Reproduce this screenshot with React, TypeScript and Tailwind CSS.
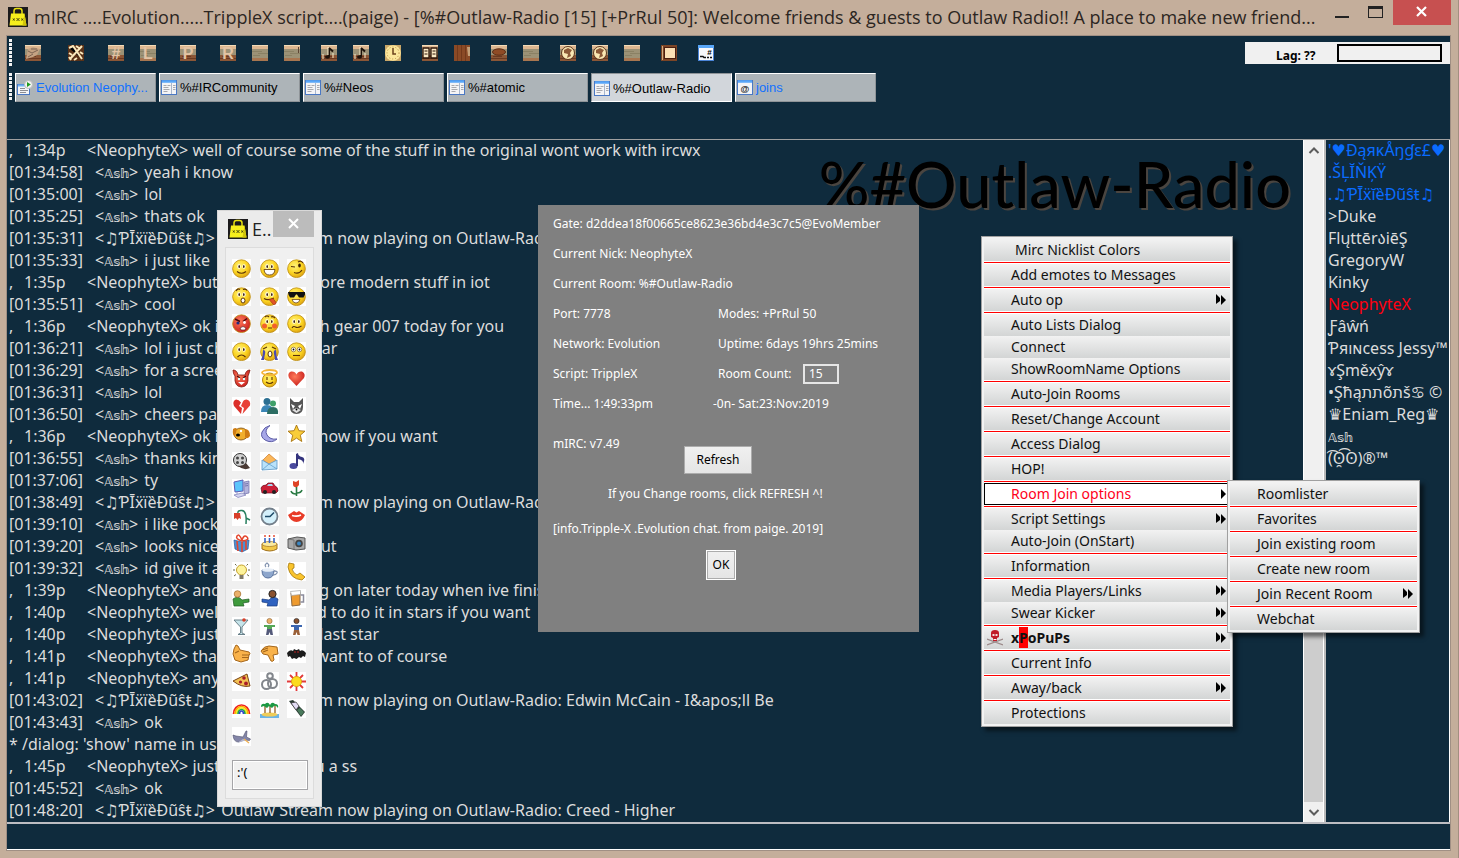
import type { ReactNode } from 'react'
import { clsx } from 'clsx'

const tahoma = "[font-family:'Noto_Sans','DejaVu_Sans',sans-serif]"
const segoe = "[font-family:'Open_Sans','Noto_Sans',sans-serif]"

/* ---------- shared icons ---------- */

function BagIcon() {
  return (
    <svg viewBox="0 0 20 20" className="h-5 w-5 shrink-0" aria-hidden="true">
      <rect width="20" height="20" fill="#1b1a1c" />
      <path d="M6 7V4q0-2.600 2.400-2.600h3.200Q14 1.400 14 4v3" fill="none" stroke="#e8e010" strokeWidth="1.500" />
      <path d="M3 6.500h13.500L18.500 18.500H1.500z" fill="#f6ee1c" />
      <path d="M16.500 6.500L18.500 18.500h-4z" fill="#d2c40a" />
      <path d="M5 11.500l1.500 2m0-2l-1.500 2M8.500 11l3 3m0-3l-3 3M13.500 11.500l1.500 2m0-2l-1.500 2" stroke="#35330c" strokeWidth=".9" />
    </svg>
  )
}

function WindowIcon({ kind }: { kind: 'status' | 'channel' | 'custom' }) {
  return (
    <svg viewBox="0 0 16 15" className="h-[15px] w-4 shrink-0" aria-hidden="true">
      <rect x=".5" y={kind === 'status' ? 4.5 : 0.5} width={kind === 'status' ? 12 : 15} height={kind === 'status' ? 10 : 14} fill="#f4f4f6" stroke="#4a78c4" />
      {kind === 'status' ? (
        <>
          <path d="M1 5.500h11" stroke="#6fb2f5" strokeWidth="2" />
          <path d="M3 8.500h5M3 10.500h8M3 12.500h6" stroke="#8d8d92" />
          <circle cx="11.500" cy="4.500" r="4" fill="#f2f2f2" stroke="#b9b9b9" />
          <path d="M10 2v5l3.800-2.500z" fill="#1d9a1d" />
        </>
      ) : (
        <path d="M1 1.500h14" stroke="#58a6f8" strokeWidth="2.500" />
      )}
      {kind === 'channel' && (
        <>
          <path d="M10.500 3v11" stroke="#a8b6cc" />
          <path d="M2.500 5.500h3m1 0h3M2.500 7.500h5M2.500 9.500h6M2.500 11.500h4M12 5.500h2.500M12 7.500h2.500M12 9.500h2.500" stroke="#a9a9ae" />
        </>
      )}
      {kind === 'custom' && (
        <text x="8" y="11.500" textAnchor="middle" fontSize="9" fontWeight="700" fontFamily="Liberation Sans" fill="#222">
          @
        </text>
      )}
    </svg>
  )
}

/* ---------- toolbar ---------- */

type Tool = { label: string; draw: ReactNode; space: string }

const glyph = (text: string) => (
  <text x="8" y="14" textAnchor="middle" fontSize="16" fontWeight="700" fontFamily="Liberation Sans" fill="#e2c3a4">
    {text}
  </text>
)

const clay = (
  <>
    <rect y="10" width="16" height="6" fill="#8b5636" />
    <path d="M0 13.500h16M2 11.500h9" stroke="#6b3a22" />
  </>
)
const plank = (
  <>
    <path d="M0 6.500h10M6 8.500h10M1 10.500h7" stroke="#8a8164" />
    <rect y="13" width="16" height="3" fill="#a87650" />
  </>
)
const note = (
  <>
    {clay}
    <path d="M8 3v8.500M8 3l4 3.500" stroke="#1d120a" strokeWidth="2" fill="none" />
    <ellipse cx="6.500" cy="12" rx="2.500" ry="1.800" fill="#1d120a" />
    <path d="M7 2v8M12 8v5M2 9v5" stroke="#fbeecb" />
  </>
)
const globe = (
  <>
    {clay}
    <circle cx="8" cy="8" r="6.500" fill="#fae8b4" stroke="#5b341c" />
    <path d="M4 5l4-2 4 2-2 3 1 3-4 2 1-4-4-1z" fill="#8c5a38" />
  </>
)

const tools: Tool[] = [
  { label: 'Connect', draw: <>{clay}<path d="M1 14L3 4l5-2 7 2-3 6-4 2z" fill="#c4a282" /><path d="M3 6l4 2 6-3M3 12l5-3M6 4h6" stroke="#7d6453" fill="none" /></>, space: 'mr-[27px]' },
  { label: 'Options', draw: <><rect width="16" height="16" fill="#5a3218" /><path d="M1 3l4-2 9 13M14 1L2 14M1 8l3 2M12 7l3 2M6 15l3-2M1 12l2 3M8 1l3 2" stroke="#fbe9bd" strokeWidth="2" /></>, space: 'mr-6' },
  { label: 'Channels', draw: <>{clay}{glyph('#')}</>, space: 'mr-4' },
  { label: 'List', draw: <>{plank}{glyph('L')}</>, space: 'mr-6' },
  { label: 'Popups', draw: <>{clay}{glyph('P')}</>, space: 'mr-6' },
  { label: 'Remote', draw: <>{clay}{glyph('R')}</>, space: 'mr-4' },
  { label: 'Aliases', draw: plank, space: 'mr-4' },
  { label: 'Variables', draw: <>{plank}<path d="M14.500 2v6" stroke="#5d4433" /></>, space: 'mr-[21px]' },
  { label: 'Play', draw: note, space: 'mr-4' },
  { label: 'Songs', draw: note, space: 'mr-4' },
  { label: 'Timer', draw: <><rect width="16" height="16" fill="#c9a768" /><circle cx="8" cy="8" r="7.800" fill="#fbe79c" /><path d="M8 3v6h3" stroke="#6b421d" fill="none" strokeWidth="1.500" /><circle cx="8" cy="8" r="6" fill="none" stroke="#b98d42" strokeDasharray="1 2" /></>, space: 'mr-[21px]' },
  { label: 'Address book', draw: <>{clay}<path d="M1 3h6v10H1zM9 3h6v10H9z" fill="#fbe9c4" stroke="#2c1508" strokeWidth="1.300" /><path d="M2.500 6h3M2.500 9h3M10.500 6h3M10.500 9h3" stroke="#2c1508" /></>, space: 'mr-4' },
  { label: 'Door', draw: <><rect width="16" height="16" fill="#8a4a26" /><path d="M3.500 0v16M7.500 0v16M11.500 0v16" stroke="#73391b" /><path d="M13 2h3v9h-2z" fill="#c4a078" /></>, space: 'mr-[21px]' },
  { label: 'Notify', draw: <>{clay}<ellipse cx="8" cy="7" rx="6.500" ry="3.200" fill="#8f4b26" stroke="#5d2e16" /></>, space: 'mr-4' },
  { label: 'Shelf', draw: plank, space: 'mr-[21px]' },
  { label: 'Send', draw: globe, space: 'mr-4' },
  { label: 'Receive', draw: globe, space: 'mr-4' },
  { label: 'Log', draw: plank, space: 'mr-[21px]' },
  { label: 'Picture', draw: <><rect width="16" height="16" fill="#7c4526" /><rect x="3.500" y="2.500" width="11" height="11" fill="#fbe0b5" stroke="#4b1e10" /><path d="M1.500 1v14" stroke="#d3ac80" /></>, space: 'mr-[21px]' },
  { label: 'Channel window', draw: <><rect x=".5" y=".5" width="15" height="15" fill="#f7f8fb" stroke="#4a84d8" /><path d="M0 1.500h16" stroke="#58a6f8" strokeWidth="3" /><text x="11.500" y="9.500" textAnchor="middle" fontSize="8" fontWeight="700" fontFamily="Liberation Sans">#</text><path d="M2 11.500h3l1 1h2M9 12.500h2m1 0h2" stroke="#111" strokeWidth="1.400" /></>, space: '' },
]

function Grip() {
  return <span className="ml-0.5 h-7 w-[3px] shrink-0 bg-[repeating-linear-gradient(#f2f2f2_0_3px,#0f2b3d_3px_4px)]" />
}

function Toolbar() {
  return (
    <div className="flex h-[34px] items-center">
      <Grip />
      <div className="ml-[13px] flex flex-1">
        {tools.map((tool) => (
          <button key={tool.label} type="button" aria-label={tool.label} className={clsx('h-4 w-4', tool.space)}>
            <svg viewBox="0 0 16 16" className="block h-4 w-4">
              <rect width="16" height="16" fill="#9c9276" />
              <rect width="16" height="4" fill="#dcb690" />
              <path d="M0 .5h16" stroke="#f3dcb9" />
              {tool.draw}
            </svg>
          </button>
        ))}
      </div>
      <div className={clsx('flex h-[22px] items-center bg-[#f0f0f0] pr-2 pl-[31px]', tahoma)}>
        <span className="w-[61px] pt-1.5 text-xs font-bold">Lag: ??</span>
        <span className="h-[18px] w-[105px] border-2 border-black" />
      </div>
    </div>
  )
}

/* ---------- switchbar ---------- */

const tabs = [
  { label: 'Evolution Neophy...', kind: 'status', hot: true },
  { label: '%#IRCommunity', kind: 'channel' },
  { label: '%#Neos', kind: 'channel' },
  { label: '%#atomic', kind: 'channel' },
  { label: '%#Outlaw-Radio', kind: 'channel', active: true },
  { label: 'joins', kind: 'custom', hot: true },
] as const

function Switchbar() {
  return (
    <div className="mt-[3px] flex h-[66px] items-start">
      <Grip />
      <nav className="ml-[3px] flex gap-[3px]">
        {tabs.map((tab) => (
          <button
            key={tab.label}
            type="button"
            className={clsx(
              "flex h-[29px] w-[141px] items-center gap-[3px] border px-px text-left [font-family:'Liberation_Sans',sans-serif] text-[13px]",
              'active' in tab
                ? 'border-t-[#8f9498] border-r-white border-b-white border-l-[#8f9498] bg-[#d2d6db] pt-0.5 pl-0.5'
                : 'border-t-white border-r-[#8f9498] border-b-[#8f9498] border-l-white bg-[#adb4b8]',
              'hot' in tab ? 'text-[#1070ff]' : 'text-black',
            )}
          >
            <WindowIcon kind={tab.kind} />
            <span className="whitespace-nowrap">{tab.label}</span>
          </button>
        ))}
      </nav>
    </div>
  )
}

/* ---------- chat ---------- */

const pixie = '♫ƤĪẍïȅÐũŝŧ♫'

type Line = { time: string; nick?: string; text: string; own?: boolean }

const lines: Line[] = [
  { time: '1:34p', own: true, text: 'well of course some of the stuff in the original wont work with ircwx' },
  { time: '[01:34:58]', nick: 'ash', text: 'yeah i know' },
  { time: '[01:35:00]', nick: 'ash', text: 'lol' },
  { time: '[01:35:25]', nick: 'ash', text: 'thats ok' },
  { time: '[01:35:31]', nick: pixie, text: 'Outlaw Stream now playing on Outlaw-Radio' },
  { time: '[01:35:33]', nick: 'ash', text: 'i just like' },
  { time: '1:35p', own: true, text: 'but theres lots more modern stuff in iot' },
  { time: '[01:35:51]', nick: 'ash', text: 'cool' },
  { time: '1:36p', own: true, text: 'ok ill have a watch gear 007 today for you' },
  { time: '[01:36:21]', nick: 'ash', text: 'lol i just changed my gear' },
  { time: '[01:36:29]', nick: 'ash', text: 'for a screen' },
  { time: '[01:36:31]', nick: 'ash', text: 'lol' },
  { time: '[01:36:50]', nick: 'ash', text: 'cheers paige' },
  { time: '1:36p', own: true, text: 'ok ill get that up now if you want' },
  { time: '[01:36:55]', nick: 'ash', text: 'thanks kindly' },
  { time: '[01:37:06]', nick: 'ash', text: 'ty' },
  { time: '[01:38:49]', nick: pixie, text: 'Outlaw Stream now playing on Outlaw-Radio' },
  { time: '[01:39:10]', nick: 'ash', text: 'i like pockets' },
  { time: '[01:39:20]', nick: 'ash', text: 'looks nice i checked it out' },
  { time: '[01:39:32]', nick: 'ash', text: 'id give it a go' },
  { time: '1:39p', own: true, text: 'and i will be going on later today when ive finished' },
  { time: '1:40p', own: true, text: 'well i only wanted to do it in stars if you want' },
  { time: '1:40p', own: true, text: 'just like with the last star' },
  { time: '1:41p', own: true, text: 'thats only if you want to of course' },
  { time: '1:41p', own: true, text: 'anyway' },
  { time: '[01:43:02]', nick: pixie, text: 'Outlaw Stream now playing on Outlaw-Radio: Edwin McCain - I&apos;ll Be' },
  { time: '[01:43:43]', nick: 'ash', text: 'ok' },
  { time: '*', text: "/dialog: 'show' name in use" },
  { time: '1:45p', own: true, text: 'just grabbing you a ss' },
  { time: '[01:45:52]', nick: 'ash', text: 'ok' },
  { time: '[01:48:20]', nick: pixie, text: 'Outlaw Stream now playing on Outlaw-Radio: Creed - Higher' },
]

function Ash() {
  return <span className="text-xs font-bold">𝔸𝕤𝕙</span>
}

function ChatLine({ line }: { line: Line }) {
  if (line.own) {
    return (
      <li className="flex h-[22px] whitespace-pre">
        <span className="w-[15px]">,</span>
        <span className="w-[63px]">{line.time}</span>
        <span>{`<NeophyteX> ${line.text}`}</span>
      </li>
    )
  }
  if (!line.nick) {
    return <li className="h-[22px] whitespace-pre">{`${line.time} ${line.text}`}</li>
  }
  return (
    <li className="flex h-[22px] whitespace-pre">
      <span className="w-[86px] shrink-0">{line.time}</span>
      <span className="mr-0.5">
        {'<'}
        {line.nick === 'ash' ? <Ash /> : line.nick}
        {'> '}
      </span>
      <span>{line.text}</span>
    </li>
  )
}

function Chat() {
  return (
    <section className="relative min-w-0 flex-1 overflow-hidden">
      <div className="absolute top-1 right-3 [font-family:'Lato',sans-serif] text-[63px] leading-[80px] font-medium whitespace-nowrap text-black [text-shadow:2px_2px_0_#4a4540]">
        %#Outlaw-Radio
      </div>
      <ul className={clsx('relative pl-0.5 text-base leading-5 text-[#dcdcdc]', tahoma)}>
        {lines.map((line, i) => (
          <ChatLine key={i} line={line} />
        ))}
      </ul>
    </section>
  )
}

function Scrollbar() {
  return (
    <div className="flex w-[21px] shrink-0 flex-col items-center border-x border-white bg-[#f0f0f0]">
      <svg viewBox="0 0 20 20" className="h-5 w-5" aria-hidden="true">
        <path d="M5.500 13L10 8.500l4.500 4.500" fill="none" stroke="#5c5c5c" strokeWidth="2" />
      </svg>
      <div className="h-[400px] w-full" />
      <div className="w-full flex-1 bg-[#cdcdcd]" />
      <svg viewBox="0 0 20 20" className="h-5 w-5" aria-hidden="true">
        <path d="M5.500 8L10 12.500 14.500 8" fill="none" stroke="#5c5c5c" strokeWidth="2" />
      </svg>
    </div>
  )
}

const nicks: { name: ReactNode; color?: string }[] = [
  { name: "'♥ĐąяĸÅŋɠε£♥", color: 'text-[#0a6cff]' },
  { name: '.ŠĻĬŇĶŸ', color: 'text-[#0a6cff]' },
  { name: '.♫ƤĪẍĭȅÐũŝŧ♫', color: 'text-[#0a6cff]' },
  { name: '>Duke' },
  { name: 'FlųttērაiēŞ' },
  { name: 'GregoryW' },
  { name: 'Kinky' },
  { name: 'NeophyteX', color: 'text-[#ff0010]' },
  { name: 'Ƒâŵń' },
  { name: 'Ƥяıɴcess Jessy™' },
  { name: 'ɤŞměxŷɤ' },
  { name: '•Şħąתתõתš♋ ©' },
  { name: '♛Eniam_Reg♛' },
  { name: <Ash /> },
  { name: '(͡ʘ̯͡ʘ)®™' },
]

function NickList() {
  return (
    <ul className={clsx('w-[126px] shrink-0 overflow-hidden border-r border-l-2 border-r-white border-l-[#b9b9b9] pl-0.5 text-base leading-5 text-[#dcdcdc]', tahoma)}>
      {nicks.map((nick, i) => (
        <li key={i} className={clsx('h-[22px] whitespace-nowrap', nick.color)}>
          {nick.name}
        </li>
      ))}
    </ul>
  )
}

/* ---------- emotes ---------- */

const ink = '#5a3208'

function Face({ fill = 'url(#sun)', children }: { fill?: string; children: ReactNode }) {
  return (
    <>
      <circle cx="9.500" cy="9.700" r="8.900" fill={fill} stroke="#b98a10" strokeWidth=".8" />
      {children}
    </>
  )
}

const eyes = (
  <>
    <ellipse cx="7" cy="7.500" rx="1.600" ry="2.300" fill="#fff" />
    <ellipse cx="12" cy="7.500" rx="1.600" ry="2.300" fill="#fff" />
    <ellipse cx="7.200" cy="7.500" rx=".8" ry="1.600" fill="#3a1c04" />
    <ellipse cx="11.800" cy="7.500" rx=".8" ry="1.600" fill="#3a1c04" />
  </>
)

const stroke = (d: string, color = ink, width = 1.1) => <path d={d} fill="none" stroke={color} strokeWidth={width} />

const emotes: [string, ReactNode][] = [
  ['smile', <Face>{eyes}{stroke('M5 12.500q4.500 3.500 9 0')}</Face>],
  ['grin', <Face>{eyes}<path d="M4 10.500h11q-.5 5.500-5.500 5.500T4 10.500z" fill="#fff" stroke={ink} strokeWidth=".8" /></Face>],
  ['wink', <Face>{stroke('M4 7.500l4 .5M11 3q3-2 5 1')}<ellipse cx="12.500" cy="6.500" rx="1.300" ry="2" fill="#3a1c04" />{stroke('M7 13.500q5 2 8-2.500')}</Face>],
  ['surprised', <Face>{eyes}{stroke('M4 4q2-3 4-1.500M11 2.500q3-1 4 1')}<ellipse cx="11" cy="13.500" rx="2" ry="2.500" fill="#fff" stroke={ink} /></Face>],
  ['tongue', <Face>{eyes}{stroke('M4 11.500q4 2.500 10-.5')}<path d="M9 12.500l4-1 3 4q0 2.500-2.500 2z" fill="#e2542a" stroke="#9a2a10" strokeWidth=".6" /></Face>],
  ['cool', <Face><path d="M1 5h17v2.500l-1.500 3h-4.500L10 7.500H9l-2 3H3L1.500 7.500z" fill="#111" /><path d="M5 12.500h8q-1 3.500-4 3.500t-4-3.500z" fill="#fff" stroke={ink} strokeWidth=".7" /></Face>],
  ['angry', <Face fill="url(#rage)">{stroke('M3 5l5 2.500M11 7.500l4-3', '#4a0808', 1.5)}<circle cx="6" cy="9" r="1.600" fill="#222a80" /><circle cx="12.500" cy="8.500" r="1.400" fill="#fff" /><path d="M8 14q3-3 6 0l-1 2H9z" fill="#fff" stroke="#4a0808" strokeWidth=".6" /></Face>],
  ['blush', <Face>{eyes}<circle cx="4.500" cy="12" r="2.500" fill="#f2602c" /><circle cx="14.500" cy="12" r="2.500" fill="#f2602c" />{stroke('M8 14h4M5 3q2-2 4 0M11 3q2-1 4 1')}</Face>],
  ['confused', <Face>{eyes}{stroke('M5 14q1.500-2.500 3.500-1t6-1')}</Face>],
  ['sad', <Face>{eyes}{stroke('M5.500 15q4-4 8 0')}</Face>],
  ['cry', <Face>{stroke('M3 7l4-2M12 5l4 2')}<ellipse cx="10" cy="12" rx="2" ry="3" fill="#fff" stroke={ink} /><path d="M3 8q3 0 2 4t-1 6H1q2-4 2-10zM16 8q-3 0-2 4t1 6h3q-2-4-2-10z" fill="#4a4ab4" /></Face>],
  ['blank', <Face><circle cx="6.500" cy="7.500" r="2.300" fill="#fff" stroke={ink} strokeWidth=".5" /><circle cx="12.500" cy="7.500" r="2.300" fill="#fff" stroke={ink} strokeWidth=".5" /><circle cx="6.500" cy="7.500" r=".9" /><circle cx="12.500" cy="7.500" r=".9" />{stroke('M6 13.500h7')}</Face>],
  ['devil', <><path d="M1 1q4 0 5 5h7q1-5 5-5-1 4-2 6 1 11-6.500 11T3 7Q1 5 1 1z" fill="url(#rage)" stroke="#7c1a10" strokeWidth=".8" />{stroke('M5 7l3 2M14 7l-3 2', '#3a0606')}<circle cx="7" cy="10" r="1.200" fill="#dff" /><circle cx="12" cy="10" r="1.200" fill="#dff" /><path d="M6 13h7l-3.500 3z" fill="#fff" /></>],
  ['angel', <><circle cx="9.500" cy="11" r="7" fill="url(#sun)" stroke="#b98a10" /><ellipse cx="9.500" cy="3.500" rx="7.500" ry="2.500" fill="none" stroke="#f5b53a" strokeWidth="1.800" />{stroke('M7 8v3M12 8v3M6 13q4 3 7 0')}</>],
  ['heart', <path d="M9.500 17L2 9Q0 4 4 2.500q4-.5 5.500 3Q11 2 15 2.500q4 2 2 6.500z" fill="url(#rage)" />],
  ['broken heart', <><path d="M9 17L2 9Q0 4 4 2.500q3 0 5 3L7 9l3 2z" fill="#dc2f2a" /><path d="M10.500 17L18 8.500q1-5-3.500-6-3 0-4 3L9 9l3 2z" fill="#e84238" /></>],
  ['people', <><circle cx="7" cy="4.500" r="3.500" fill="#2c6f92" /><circle cx="13" cy="6.500" r="3" fill="#3fa06a" /><path d="M1 15q0-7 6-7t6 7z" fill="#3c86b6" /><path d="M7 17q0-7 6-7t5 7z" fill="#2d6e64" /></>],
  ['cat', <><path d="M3 1l4 4h5l4-4v9q0 7-6.500 7T3 10z" fill="#555" /><path d="M4 7l4 2-2 3zM15 7l-4 2 2 3z" fill="#fff" /><path d="M5 13l4.500-2 4.500 2-4.500 3z" fill="#e0e0e0" /><circle cx="9.500" cy="12.500" r=".9" /></>],
  ['dog', <><ellipse cx="9" cy="10" rx="7" ry="6" fill="#f1ae2c" stroke="#7a4a0a" strokeWidth=".8" /><path d="M1 5q3-2 4 0l-2 7Q0 12 1 5zM13 5q5 0 5 7-3 4-5 1z" fill="#cf7c14" /><ellipse cx="6" cy="11" rx="2" ry="1.500" /><circle cx="9" cy="7" r="1.200" fill="#fff" /></>],
  ['moon', <path d="M10 1.500Q4 6 7 11t10 4Q12 19.500 6 16.500T2 8q2-5 8-6.500z" fill="#a8a8e8" stroke="#5c5ca6" />],
  ['star', <path d="M9.500 1l2.400 5.700 6.100.5-4.700 4 1.500 6.300-5.300-3.400-5.300 3.400 1.500-6.300L1 7.200l6.100-.5z" fill="#f9cd3a" stroke="#a87410" strokeWidth=".9" />],
  ['film', <><circle cx="8" cy="8" r="6.500" fill="#d2d2d2" stroke="#333" /><circle cx="5.500" cy="6" r="1.500" fill="#444" /><circle cx="10.500" cy="6" r="1.500" fill="#444" /><circle cx="5.500" cy="10.500" r="1.500" fill="#444" /><circle cx="10.500" cy="10.500" r="1.500" fill="#444" /><path d="M6 14q6 0 8-3l4 5q-6 3-12-2z" fill="#4a3a34" /></>],
  ['email', <><path d="M3 8l6-6 7 6-6 5z" fill="#fbb75a" stroke="#cc7a2a" strokeWidth=".7" /><path d="M2 8l7 4 8-4v9l-15 1z" fill="#b9e2fa" stroke="#5a96c4" strokeWidth=".8" /><path d="M2 18l7-6 8 5" fill="none" stroke="#5a96c4" strokeWidth=".7" /></>],
  ['note', <><ellipse cx="6.500" cy="14" rx="4" ry="3" fill="#4a4a9e" /><path d="M9 14V2l2-1q0 3 4 4t1 7q1-4-5-5v7z" fill="#34347e" /></>],
  ['computer', <><path d="M2 3l9-2v11L3 13z" fill="#5ac4fb" stroke="#5a5ab4" /><path d="M12 3l5-1v12l-5 1z" fill="#b4b4dc" stroke="#6a6aa6" strokeWidth=".7" /><path d="M13 5l3-.5M13 7l3-.5" stroke="#5a5a9a" strokeWidth=".7" /><path d="M5 13v2M2 16l8-2 4 2-8 2.500z" fill="#d5d5f0" stroke="#7a7ab4" strokeWidth=".7" /></>],
  ['car', <><path d="M1 9q1-3 5-3l2-2h5l2 3q3 1 3 5l-2 2H2z" fill="#cc2038" stroke="#6a0c1c" strokeWidth=".7" /><path d="M7 7l1.500-2H12l1 2z" fill="#a9d4f0" /><circle cx="5" cy="13" r="2" fill="#222" /><circle cx="14" cy="13" r="2" fill="#222" /></>],
  ['rose', <><path d="M6 2l3 1 3-2v5q-2 3-4 2-2 0-2-3z" fill="#de4426" /><path d="M9.500 8v9M10 14q4 0 5-3M9 15q-4 0-5-3" fill="none" stroke="#2a7a44" strokeWidth="1.600" /></>],
  ['wilted rose', <><path d="M14 17Q15 4 10 3.500T6 7M14 11l4 2" fill="none" stroke="#2a8060" strokeWidth="1.500" /><path d="M2 6h6l1 6-2-1-1.500 2L4 11l-2 1z" fill="#d8402a" /></>],
  ['clock', <><circle cx="9.500" cy="9.500" r="8" fill="#d4f0fb" stroke="#74808c" strokeWidth="1.800" /><path d="M5 9.500h5l4-4" fill="none" stroke="#1c4a68" strokeWidth="1.500" /></>],
  ['kiss', <><path d="M1 8l6-4 2.500 1.500L12 4l6 4q-3 7-8.500 7T1 8z" fill="#e83c28" /><path d="M5 8.500q5 1.500 9-.5" stroke="#fff" strokeWidth="1.600" fill="none" /></>],
  ['gift', <><path d="M2 6l8 2 7-2-1 9-6 3-7-3z" fill="#4a90d4" stroke="#2a5a9a" strokeWidth=".7" /><path d="M10 8v10M5 7l1 10M14 7v9" stroke="#e4452c" strokeWidth="1.600" /><path d="M10 7Q3 5 5 2t5 4q2-6 5-3t-5 4" fill="none" stroke="#e4452c" strokeWidth="1.500" /></>],
  ['cake', <><path d="M2 10h15v5q-7 4-15 0z" fill="#f2c848" stroke="#a0701c" /><ellipse cx="9.500" cy="10" rx="7.500" ry="2.500" fill="#faeaa0" stroke="#a0701c" strokeWidth=".7" /><path d="M5 9V4M9.500 9V4M14 9V4" stroke="#3a66c4" strokeWidth="1.600" /><path d="M5 3V1M9.500 3V1M14 3V1" stroke="#e4452c" strokeWidth="1.400" /></>],
  ['camera', <><path d="M1 5l9-2 8 1v11l-9 1-8-2z" fill="#a8a8a8" stroke="#555" /><path d="M1 5l6 1v10" fill="none" stroke="#666" strokeWidth=".7" /><circle cx="12" cy="9.500" r="3.800" fill="#444" /><circle cx="12" cy="9.500" r="2" fill="#3c88c4" /></>],
  ['idea', <><circle cx="9.500" cy="8" r="5" fill="#fdf39a" stroke="#c4a02c" /><path d="M7.500 13h4v4h-4z" fill="#807a68" /><path d="M1 8h2M16 8h2M3 2l1.500 1.500M16 2l-1.500 1.500M2 14l2-1.500M17 14l-2-1.500" stroke="#6a6a4a" /></>],
  ['coffee', <><path d="M2 8h12q0 8-6 8T2 8z" fill="#8da6cc" stroke="#56709c" /><ellipse cx="8" cy="8" rx="6" ry="1.800" fill="#e6eef8" /><path d="M14 9q4 0 3 2t-4 2M6 5q-2-2 1-4 3 2 1 4" fill="none" stroke="#8494b0" strokeWidth="1.300" /></>],
  ['phone', <path d="M2 1l5 1v4L5 7q1 4 5 6l3-2 5 4-3 3Q3 17 1 5z" fill="#fac42c" stroke="#a4780c" strokeWidth=".8" />],
  ['hug left', <><path d="M1 10q5-4 9 1l7-1v3l-6 1 1 3H2z" fill="#3e9a3c" stroke="#1f5a22" strokeWidth=".7" /><circle cx="5.500" cy="5" r="3.300" fill="#eab06a" stroke="#a06a2a" strokeWidth=".7" /></>],
  ['hug right', <><path d="M18 10q-5-4-9 1l-7-1v3l6 1-1 3h10z" fill="#2f62c0" stroke="#173a7c" strokeWidth=".7" /><circle cx="12.500" cy="5" r="3.600" fill="#8a5230" stroke="#222" /></>],
  ['beer', <><path d="M4 4l9-1v13l-8 1z" fill="#ee9a2e" stroke="#8c6a44" /><path d="M3.500 2.500l10-1v4l-9 1z" fill="#fff" stroke="#a0a0a0" strokeWidth=".7" /><path d="M13.500 6h3v7h-3" fill="none" stroke="#8c8c9c" strokeWidth="1.500" /></>],
  ['cocktail', <><path d="M2 3h14l-6 7v6l3 1.500H6L8.500 16v-6z" fill="#c6e4ea" stroke="#5f7680" strokeWidth=".9" /><circle cx="12" cy="3" r="1.800" fill="#d8402a" /></>],
  ['boy', <><circle cx="9.500" cy="4" r="2.600" fill="#eab06a" stroke="#8a6030" strokeWidth=".6" /><path d="M4 8h11v2h-3v3H7v-3H4z" fill="#56a858" /><path d="M7 12h5l1 6h-2.500l-1-3-1 3H6z" fill="#545a7a" /></>],
  ['girl', <><circle cx="9.500" cy="4" r="2.600" fill="#8a5230" stroke="#222" strokeWidth=".6" /><path d="M4 8h11v2h-3v4H7v-4H4z" fill="#3c66b0" /><path d="M7 13h5l1 5h-2.500l-1-3-1 3H6z" fill="#9a6038" /></>],
  ['thumbs up', <><path d="M2 5L4 1l2 1 2 4 9 2q2 2 0 3l-1 5-7 2-6-2-2-6z" fill="#f9b24a" stroke="#a4661c" />{stroke('M10 11h7M10 13.500h6M3 9l4-2', '#a4661c')}</>],
  ['thumbs down', <><path d="M1 7q3-5 8-5l8 1 1 7-5 1 1 5q-1 2-3 1L8 11l-5-1z" fill="#f9b24a" stroke="#a4661c" />{stroke('M3 8l5-2M2 6l6-2', '#a4661c')}</>],
  ['bat', <><path d="M0 9q3-4 6-2l1-2 2 1h1l2-1 1 2q3-2 6 2l-1 4-2-1-2 2-2-1-2.500 2L7 14l-2 1-2-3-2 1z" fill="#1c1c1c" /><path d="M7.500 8h1M10.500 8h1" stroke="#e22" strokeWidth="1.500" /></>],
  ['pizza', <><path d="M1 9l14-7 3 12q-8 2-17-5z" fill="#f4c254" stroke="#7a4414" /><circle cx="12" cy="6" r="1.800" fill="#a81c28" /><circle cx="8.500" cy="10" r="1.600" fill="#a81c28" /><circle cx="14" cy="11.500" r="1.900" fill="#a81c28" /></>],
  ['handcuffs', <g fill="none" stroke="#82868c" strokeWidth="2"><circle cx="6.500" cy="12.500" r="4.500" /><circle cx="12.500" cy="11.500" r="4.500" /><circle cx="10" cy="4" r="2.800" /></g>],
  ['sun', <><path d="M9.500 0v19M0 9.500h19M3 3l13 13M16 3L3 16" stroke="#e23a3a" strokeWidth="1.800" /><circle cx="9.500" cy="9.500" r="5" fill="#fbdc1c" stroke="#e0a010" /></>],
  ['rainbow', <g fill="none" strokeWidth="1.700"><path d="M1.500 15a8 9 0 0 1 16 0" stroke="#e22" /><path d="M3 15a6.500 7.500 0 0 1 13 0" stroke="#fa0" /><path d="M4.500 15a5 6 0 0 1 10 0" stroke="#ee2" /><path d="M6 15a3.500 4.500 0 0 1 7 0" stroke="#2a4" /><path d="M7.500 15a2 3 0 0 1 4 0" stroke="#34c" /></g>],
  ['island', <><rect y="15" width="19" height="4" fill="#6ab4e8" /><ellipse cx="9.500" cy="15.500" rx="8" ry="2" fill="#f0cc58" /><path d="M5 14V6M10 14V7M15 14V6" stroke="#9a6a34" strokeWidth="1.400" /><path d="M1 8q0-4 4-3 3-3 5 1 2-4 5-1 4 0 3 4-2-3-4-2l-2 2-3-2-2 2-3-2z" fill="#1d9a44" /></>],
  ['mobile', <><path d="M2 2l4-1 12 12-4 5z" fill="#2c3c34" /><path d="M4 4l5-1 3 4-3 4z" fill="#e2dcf4" stroke="#333" strokeWidth=".7" /><path d="M10 11l3-2 4 4-3 4z" fill="#4a7a5c" /></>],
  ['plane', <><path d="M1 8l3 1 7 1 3-6 1 0-.5 6 4 2-1 1.500-5-.5-6 2q-5 0-5.500-7z" fill="#8486a8" stroke="#50526e" strokeWidth=".6" /><path d="M5 16l6-4 4 1z" fill="#b8bad0" /><path d="M12 12l5 4" stroke="#f0b050" strokeWidth="1.300" /></>],
]

function EmoteWindow() {
  return (
    <div className="absolute top-[210px] left-[217px] w-[105px] border border-[#d8d8d8] bg-[#ebebeb] px-[7px] pb-[7px]">
      <div className="flex h-9 items-start">
        <div className="ml-[3px] flex flex-1 items-center gap-1 pt-2">
          <BagIcon />
          <span className={clsx('text-lg leading-5 text-[#222]', segoe)}>E..</span>
        </div>
        <button type="button" aria-label="Close emotes" className="h-[26px] w-[41px] shrink-0 bg-[#bcbcbc]">
          <svg viewBox="0 0 41 26" className="block h-full w-full">
            <path d="M16 8l9 9M25 8l-9 9" stroke="#fff" strokeWidth="2" />
          </svg>
        </button>
      </div>
      <div className="border border-[#dcdcdc] bg-[#f0f0f0] pt-[11px] pr-[5px] pb-2 pl-1.5">
        <svg className="absolute h-0 w-0" aria-hidden="true">
          <defs>
            <radialGradient id="sun" cx=".4" cy=".35" r=".7">
              <stop offset="0" stopColor="#fff27a" />
              <stop offset=".6" stopColor="#fbd320" />
              <stop offset="1" stopColor="#d99a10" />
            </radialGradient>
            <radialGradient id="rage" cx=".4" cy=".35" r=".7">
              <stop offset="0" stopColor="#ff7a5a" />
              <stop offset="1" stopColor="#c81e1c" />
            </radialGradient>
          </defs>
        </svg>
        <div className="grid h-[487px] grid-cols-[repeat(3,19px)] content-between justify-between pr-0.5">
          {emotes.map(([name, drawing]) => (
            <button key={name} type="button" aria-label={name} className="h-[19px] w-[19px] bg-white">
              <svg viewBox="0 0 19 19" className="block h-[19px] w-[19px]">
                {drawing}
              </svg>
            </button>
          ))}
        </div>
        <input
          aria-label="Emote code"
          defaultValue=":'("
          className={clsx('mt-3.5 block h-[30px] w-full border border-[#a5a5a8] bg-[#f0f0f0] px-1 pb-1.5 text-[13px] text-black outline-1 -outline-offset-2 outline-white', tahoma)}
        />
      </div>
    </div>
  )
}

/* ---------- info dialog ---------- */

function InfoRow({ left, right }: { left: string; right?: ReactNode }) {
  return (
    <div className="grid h-[30px] grid-cols-[165px_1fr] items-center whitespace-nowrap">
      <span>{left}</span>
      {right && <span>{right}</span>}
    </div>
  )
}

function InfoDialog() {
  return (
    <div className={clsx('absolute top-[205px] left-[538px] h-[427px] w-[381px] bg-[#808080] px-[15px] pt-1 text-xs text-white', tahoma)}>
      <InfoRow left="Gate: d2ddea18f00665ce8623e36bd4e3c7c5@EvoMember" />
      <InfoRow left="Current Nick: NeophyteX" />
      <InfoRow left="Current Room: %#Outlaw-Radio" />
      <InfoRow left="Port: 7778" right="Modes: +PrRul 50" />
      <InfoRow left="Network: Evolution" right="Uptime: 6days 19hrs 25mins" />
      <InfoRow
        left="Script: TrippleX"
        right={
          <label className="flex items-center">
            <span className="w-[85px]">Room Count:</span>
            <input defaultValue="15" className="h-5 w-9 border-2 border-[#e6e6e6] bg-transparent px-1 pb-0.5" />
          </label>
        }
      />
      <InfoRow left="Time... 1:49:33pm" right={<span className="-ml-[5px]">-0n- Sat:23:Nov:2019</span>} />
      <div className="mt-[15px] flex h-10 leading-5">
        <span className="w-[131px]">mIRC: v7.49</span>
        <button type="button" className="h-7 w-[68px] self-end border border-[#acacac] bg-linear-to-b from-[#f0f0f0] to-[#e5e5e5] text-black">
          Refresh
        </button>
      </div>
      <p className="mt-2.5 pl-[55px] leading-5">If you Change rooms, click REFRESH ^!</p>
      <p className="mt-[15px] leading-5">[info.Tripple-X .Evolution chat. from paige. 2019]</p>
      <button type="button" className="mt-[11px] ml-[153px] block h-[30px] w-[30px] border border-white bg-linear-to-b from-[#f0f0f0] to-[#e5e5e5] text-black outline-1 -outline-offset-2 outline-[#acacac]">
        OK
      </button>
    </div>
  )
}

/* ---------- popup menus ---------- */

type Item = { label: ReactNode; more?: boolean; rule?: boolean; current?: boolean; skull?: boolean }

const mainMenu: Item[] = [
  { label: <span className="pl-1">Mirc Nicklist Colors</span>, rule: true },
  { label: 'Add emotes to Messages', rule: true },
  { label: 'Auto op', more: true, rule: true },
  { label: 'Auto Lists Dialog' },
  { label: 'Connect' },
  { label: 'ShowRoomName Options', rule: true },
  { label: 'Auto-Join Rooms', rule: true },
  { label: 'Reset/Change Account', rule: true },
  { label: 'Access Dialog', rule: true },
  { label: 'HOP!', rule: true },
  { label: 'Room Join options', more: true, rule: true, current: true },
  { label: 'Script Settings', more: true },
  { label: 'Auto-Join (OnStart)', rule: true },
  { label: 'Information', rule: true },
  { label: 'Media Players/Links', more: true },
  { label: 'Swear Kicker', more: true, rule: true },
  { label: <b>x<span className="bg-[#ff0000] py-px">P</span>oPuPs</b>, more: true, rule: true, skull: true },
  { label: 'Current Info', rule: true },
  { label: 'Away/back', more: true, rule: true },
  { label: 'Protections' },
]

const joinMenu: Item[] = [
  { label: 'Roomlister', rule: true },
  { label: 'Favorites', rule: true },
  { label: 'Join existing room', rule: true },
  { label: 'Create new room', rule: true },
  { label: 'Join Recent Room', more: true, rule: true },
  { label: 'Webchat' },
]

function Skull() {
  return (
    <svg viewBox="0 0 16 16" className="h-4 w-4" aria-hidden="true">
      <path d="M0 9l16 6M16 9L0 15" stroke="#9c8a8a" strokeWidth="1.200" />
      <path d="M4 3q0-3 4-3t4 3v4l-2 1v3H6V8L4 7z" fill="#c01c28" />
      <path d="M5.500 4h2v2h-2zM8.500 4h2v2h-2z" fill="#f4dcdc" />
      <path d="M6.500 9.500h3" stroke="#fff" />
    </svg>
  )
}

function Menu({ items, className }: { items: Item[]; className: string }) {
  return (
    <ul className={clsx('absolute border border-[#a0a0a0] bg-[#f2f2f2] p-0.5 text-sm text-[#111] shadow-[4px_4px_4px_rgba(0,0,0,0.5)]', tahoma, className)}>
      {items.map((item, i) => (
        <li key={i}>
          <button
            type="button"
            className={clsx(
              'flex h-[22px] w-full items-center text-left whitespace-nowrap',
              item.current ? 'border border-black bg-white text-[#ff0020]' : 'bg-linear-to-b from-[#f2f2f2] to-[#d3d5d5]',
            )}
          >
            <span className={clsx('flex shrink-0 pl-[3px]', item.current ? 'w-[26px]' : 'w-[27px]')}>{item.skull && <Skull />}</span>
            <span className="flex-1">{item.label}</span>
            {item.more && (
              <svg viewBox="0 0 10 12" className={clsx('h-3 w-2.5', item.current ? 'mr-[3px]' : 'mr-1')} aria-hidden="true">
                {!item.current && <path d="M0 0l4 4v3l-4 3z" fill="#000" />}
                <path d="M5 1l5 5-5 5z" fill="#000" />
              </svg>
            )}
          </button>
          {item.rule && (
            <div className="bg-white py-px">
              <div className="h-px bg-[#ff0000]" />
            </div>
          )}
        </li>
      ))}
    </ul>
  )
}

/* ---------- main window ---------- */

function TitleBar() {
  return (
    <header className="flex h-[35px] items-start pl-2">
      <div className="flex min-w-0 flex-1 items-center gap-1.5 pt-[3px]">
        <BagIcon />
        <h1 className={clsx('truncate text-lg leading-7 text-[#2c2622]', segoe)}>
          mIRC ....Evolution.....TrippleX script....(paige) - [%#Outlaw-Radio [15] [+PrRul 50]: Welcome friends &amp; guests to Outlaw Radio!! A place to make new friend...
        </h1>
      </div>
      <div className="ml-3 flex shrink-0">
        <button type="button" aria-label="Minimize" className="mt-4 h-0.5 w-3.5 bg-[#222]" />
        <button type="button" aria-label="Maximize" className="mt-1.5 ml-[19px] h-3 w-[15px] border border-t-[3px] border-[#222]" />
        <button type="button" aria-label="Close" className="ml-2.5 h-[25px] w-[58px] bg-[#c75050]">
          <svg viewBox="0 0 58 25" className="block h-full w-full">
            <path d="M24 7l9 9M33 7l-9 9" stroke="#fff" strokeWidth="2.200" />
          </svg>
        </button>
      </div>
    </header>
  )
}

export default function App() {
  return (
    <div className="relative flex min-h-screen flex-col overflow-hidden border-r border-[#a28f80] bg-[#c4ae9b] pr-[7px] pb-[7px]">
      <TitleBar />
      <main className="ml-1.5 flex flex-1 flex-col border border-[#a08f84] bg-[#0f2b3d]">
        <Toolbar />
        <Switchbar />
        <div className="flex flex-1 border-t border-[#a0a0a0]">
          <Chat />
          <Scrollbar />
          <NickList />
        </div>
        <input aria-label="Message" className="h-7 border-t-2 border-b border-t-[#bdbdc2] border-b-white bg-transparent px-1 text-white outline-none" />
      </main>
      <InfoDialog />
      <EmoteWindow />
      <Menu items={mainMenu} className="top-[236px] left-[981px] w-[252px]" />
      <Menu items={joinMenu} className="top-[480px] left-[1227px] w-[193px]" />
    </div>
  )
}
